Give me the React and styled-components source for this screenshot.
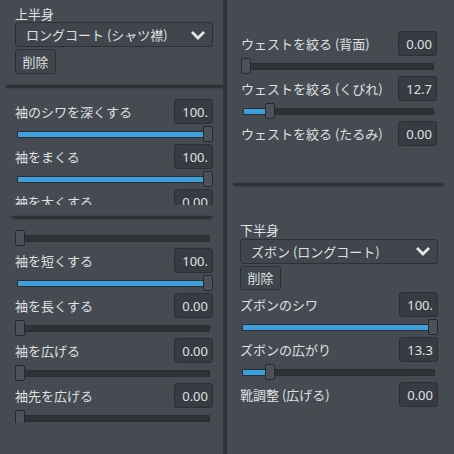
import React from 'react'
import styled, { createGlobalStyle } from 'styled-components'

const GlobalStyle = createGlobalStyle`
  body {
    margin: 0;
    background: #464b52;
    font-family: "Noto Sans CJK JP", "Noto Sans", sans-serif;
    color: #dfe0e2;
  }
`

const Root = styled.div`
  width: 454px;
  height: 454px;
  display: flex;
  overflow: hidden;
  background: #464b52;
`

const Column = styled.div`
  width: ${(p) => p.$width}px;
  flex-shrink: 0;
  display: flex;
  flex-direction: column;
`

const VSep = styled.div`
  width: 4px;
  flex-shrink: 0;
  background: #30343a;
  box-shadow: 0 0 1px #30343a;
`

const HSep = styled.div`
  height: 3px;
  margin: ${(p) => p.$margin};
  background: #2f3338;
  border-radius: 2px;
  box-shadow: 0 0 2px #2f3338;
  flex-shrink: 0;
`

const Scroll = styled.div`
  height: ${(p) => p.$height}px;
  padding: ${(p) => p.$pad};
  overflow: hidden;
  flex-shrink: 0;
  box-sizing: border-box;
  display: flex;
  flex-direction: column;
`

const Heading = styled.div`
  font-size: 13px;
  line-height: 16px;
  margin-top: ${(p) => p.$top || 0}px;
`

const Dropdown = styled.div`
  height: 25px;
  box-sizing: border-box;
  margin-top: ${(p) => p.$top || 0}px;
  background: #41454c;
  border: 1px solid #2c3035;
  border-radius: 3px;
  display: flex;
  align-items: center;
  justify-content: space-between;
  padding: 0 6px 0 10px;
  font-size: 13px;
  svg {
    display: block;
  }
`

const Button = styled.div`
  width: 41px;
  height: 25px;
  box-sizing: border-box;
  margin-top: 2px;
  background: #41454c;
  border: 1px solid #2c3035;
  border-radius: 3px;
  display: flex;
  align-items: center;
  justify-content: center;
  font-size: 13px;
`

const RowHead = styled.div`
  height: 25px;
  display: flex;
  align-items: center;
  justify-content: space-between;
  flex-shrink: 0;
  margin-top: ${(p) => p.$top || 0}px;
`

const Label = styled.span`
  font-size: 13px;
  white-space: nowrap;
`

const ValueBox = styled.div`
  width: 39px;
  height: 25px;
  box-sizing: border-box;
  background: #383c42;
  border: 1px solid #2c3035;
  border-radius: 3px;
  font-family: "Noto Sans", sans-serif;
  font-size: 13px;
  display: flex;
  align-items: center;
  justify-content: flex-end;
  padding-right: 4px;
  overflow: hidden;
`

const SliderWrap = styled.div`
  position: relative;
  height: 20px;
  flex-shrink: 0;
`

const Track = styled.div`
  margin: 7px 3px 0 2px;
  height: 7px;
  background: #2f3338;
  border: 1px solid #2a2d32;
  border-radius: 1px;
  box-sizing: border-box;
  overflow: hidden;
`

const Fill = styled.div`
  height: 100%;
  background: #3ea1de;
`

const Grabber = styled.div`
  position: absolute;
  top: 2px;
  width: 10px;
  height: 16px;
  box-sizing: border-box;
  background: #4d525a;
  border: 1px solid #26292e;
  border-radius: 2px;
`

const Chevron = () => (
  <svg width="16" height="10" viewBox="0 0 16 10">
    <polyline points="2,2 8,8 14,2" fill="none" stroke="#e6e7e9" strokeWidth="2.8" />
  </svg>
)

const Slider = ({ value }) => (
  <SliderWrap>
    <Track>
      <Fill style={{ width: `${value * 100}%` }} />
    </Track>
    <Grabber style={{ left: `calc(${value} * (100% - 10px))` }} />
  </SliderWrap>
)

const Param = ({ label, value, pos, top }) => (
  <>
    <RowHead $top={top}>
      <Label>{label}</Label>
      <ValueBox>{value}</ValueBox>
    </RowHead>
    {pos !== undefined && <Slider value={pos} />}
  </>
)

const App = () => {
  return (
    <Root>
      <GlobalStyle />
      <Column $width={223}>
        <Scroll $height={85} $pad="0 10px 0 15px">
          <Heading $top={6}>上半身</Heading>
          <Dropdown>
            <span>ロングコート (シャツ襟)</span>
            <Chevron />
          </Dropdown>
          <Button>削除</Button>
        </Scroll>
        <HSep $margin="0 0 0 6px" />
        <Scroll $height={117} $pad="11px 10px 0 15px">
          <Param label="袖のシワを深くする" value="100." pos={1} />
          <Param label="袖をまくる" value="100." pos={1} />
          <Param label="袖を太くする" value="0.00" pos={0} />
        </Scroll>
        <HSep $margin="11px 11px 0 12px" />
        <Scroll $height={204} $pad="9px 10px 0 15px">
          <Slider value={0} />
          <Param label="袖を短くする" value="100." pos={1} />
          <Param label="袖を長くする" value="0.00" pos={0} />
          <Param label="袖を広げる" value="0.00" pos={0} />
          <Param label="袖先を広げる" value="0.00" pos={0} />
        </Scroll>
      </Column>
      <VSep />
      <Column $width={227}>
        <Scroll $height={183} $pad="31px 17px 0 14px">
          <Param label="ウェストを絞る (背面)" value="0.00" pos={0} />
          <Param label="ウェストを絞る (くびれ)" value="12.7" pos={0.127} />
          <Param label="ウェストを絞る (たるみ)" value="0.00" />
        </Scroll>
        <HSep $margin="0 10px 0 6px" />
        <Scroll $height={221} $pad="36px 16px 0 13px">
          <Heading>下半身</Heading>
          <Dropdown $top={1}>
            <span>ズボン (ロングコート)</span>
            <Chevron />
          </Dropdown>
          <Button>削除</Button>
          <Param label="ズボンのシワ" value="100." pos={1} top={2} />
          <Param label="ズボンの広がり" value="13.3" pos={0.133} />
          <Param label="靴調整 (広げる)" value="0.00" />
        </Scroll>
      </Column>
    </Root>
  )
}

export default App
